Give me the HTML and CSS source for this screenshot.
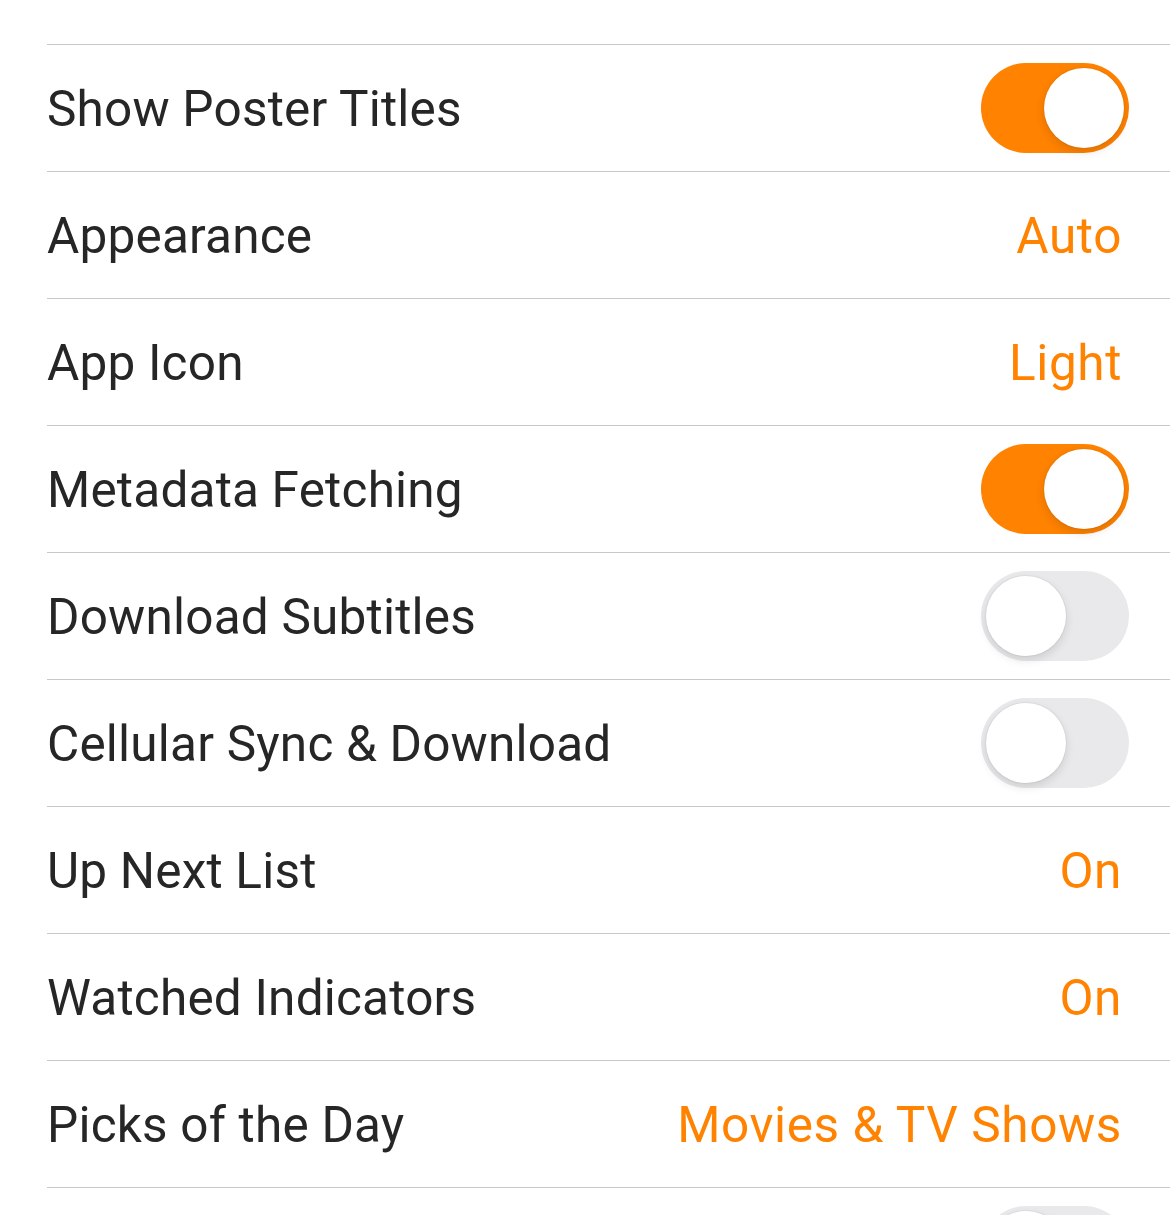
FILE: index.html
```html
<!DOCTYPE html>
<html lang="en">
<head>
    <meta charset="UTF-8">
    <meta name="viewport" content="width=device-width, initial-scale=1.0">
    <title>Settings</title>
    <link rel="stylesheet" href="styles.css">
</head>
<body>
    <div class="settings-list">
        <div class="settings-row">
            <span class="row-label">Default Sort Mode</span>
            <span class="row-value">Title</span>
        </div>
        <div class="settings-row">
            <span class="row-label">Show Poster Titles</span>
            <span class="switch on"><span class="knob"></span></span>
        </div>
        <div class="settings-row">
            <span class="row-label">Appearance</span>
            <span class="row-value">Auto</span>
        </div>
        <div class="settings-row">
            <span class="row-label">App Icon</span>
            <span class="row-value">Light</span>
        </div>
        <div class="settings-row">
            <span class="row-label">Metadata Fetching</span>
            <span class="switch on"><span class="knob"></span></span>
        </div>
        <div class="settings-row">
            <span class="row-label">Download Subtitles</span>
            <span class="switch"><span class="knob"></span></span>
        </div>
        <div class="settings-row">
            <span class="row-label">Cellular Sync &amp; Download</span>
            <span class="switch"><span class="knob"></span></span>
        </div>
        <div class="settings-row">
            <span class="row-label">Up Next List</span>
            <span class="row-value">On</span>
        </div>
        <div class="settings-row">
            <span class="row-label">Watched Indicators</span>
            <span class="row-value">On</span>
        </div>
        <div class="settings-row">
            <span class="row-label">Picks of the Day</span>
            <span class="row-value">Movies &amp; TV Shows</span>
        </div>
        <div class="settings-row">
            <span class="switch"><span class="knob"></span></span>
        </div>
    </div>
</body>
</html>
```

FILE: styles.css
```css
body {
    margin: 0;
    padding: 0;
    background-color: #fff;
    font-family: Roboto, "Liberation Sans", sans-serif;
    overflow: hidden;
}

.settings-list {
    margin-top: -82px;
    padding-left: 47px;
}

.settings-row {
    height: 126px;
    display: flex;
    align-items: center;
    justify-content: space-between;
    border-bottom: 1px solid #c8c8ca;
    padding-right: 41px;
}

.settings-row .switch:only-child {
    margin-left: auto;
}

.row-label {
    font-size: 49.5px;
    letter-spacing: 0.2px;
    color: #262626;
    padding-top: 2px;
}

.row-value {
    font-size: 49.5px;
    letter-spacing: 0.6px;
    color: #ff8200;
    padding-top: 2px;
    margin-right: 7px;
}

.switch {
    width: 148px;
    height: 90px;
    border-radius: 45px;
    background-color: #e9e9eb;
    display: flex;
    align-items: center;
    padding: 0 5px;
    box-sizing: border-box;
    justify-content: flex-start;
}

.switch.on {
    background-color: #ff8200;
    justify-content: flex-end;
}

.knob {
    width: 80px;
    height: 80px;
    border-radius: 50%;
    background-color: #fff;
    box-shadow: 0 4px 10px rgba(0, 0, 0, 0.12), 0 0 0 1px rgba(0, 0, 0, 0.04);
}
```
